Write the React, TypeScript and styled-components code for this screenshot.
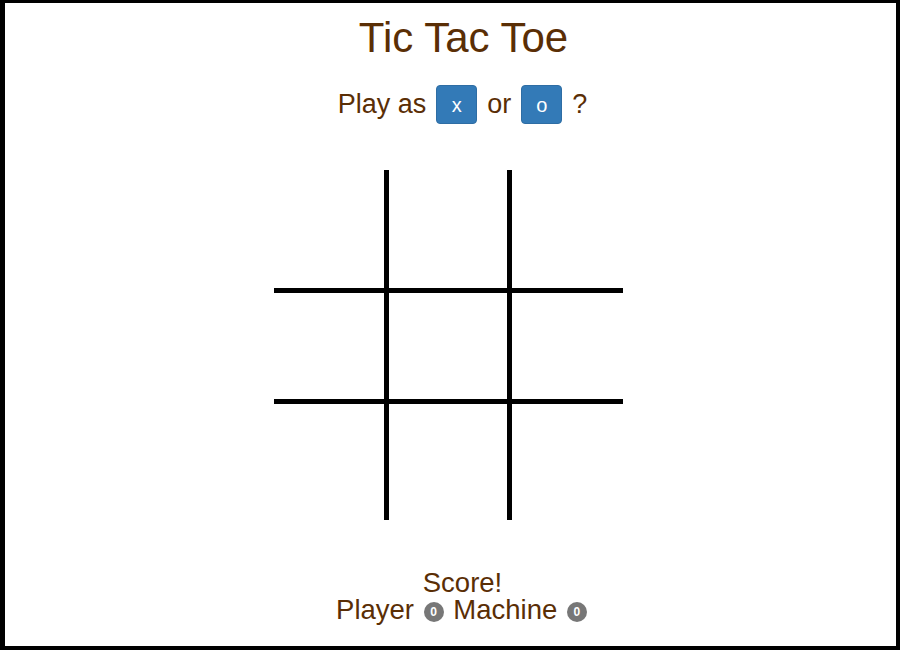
import styled, { createGlobalStyle } from "styled-components"

const GlobalStyle = createGlobalStyle`
  html, body {
    margin: 0;
    padding: 0;
    background: #fff;
  }
  body {
    font-family: "Liberation Sans", Arial, sans-serif;
  }
`

const brown = "#5a2e05"

export default function App() {
  const cells = [0, 1, 2, 3, 4, 5, 6, 7, 8]

  return (
    <>
      <GlobalStyle />
      <Frame>
        <Title>Tic Tac Toe</Title>

        <Chooser>
          <span>Play as</span>
          <PickButton type="button">x</PickButton>
          <span>or</span>
          <PickButton type="button">o</PickButton>
          <span>?</span>
        </Chooser>

        <Board>
          {cells.map((i) => (
            <Cell key={i} $col={i % 3} $row={Math.floor(i / 3)} />
          ))}
        </Board>

        <Score>
          <div>Score!</div>
          <div>
            Player <Badge>0</Badge> Machine <Badge>0</Badge>
          </div>
        </Score>
      </Frame>
    </>
  )
}

const Frame = styled.div`
  width: 900px;
  height: 650px;
  box-sizing: border-box;
  border-style: solid;
  border-color: #000;
  border-width: 3px 4px 4px 5px;
  display: flex;
  flex-direction: column;
  align-items: center;
  color: ${brown};
`

const Title = styled.h1`
  margin: 12px 0 0;
  padding-left: 26px;
  font-size: 42px;
  font-weight: 400;
  line-height: 45px;
`

const Chooser = styled.div`
  margin-top: 25px;
  padding-left: 24px;
  display: flex;
  align-items: center;
  gap: 10px;
  font-size: 27px;
  line-height: 29px;
`

const PickButton = styled.button`
  width: 41px;
  height: 39px;
  padding: 0;
  border: 1px solid #2e6da4;
  border-radius: 4px;
  background: #337ab7;
  color: #fff;
  font-family: "Liberation Sans", Arial, sans-serif;
  font-size: 20px;
  line-height: 1;
  cursor: pointer;
`

const Board = styled.div`
  margin-top: 46px;
  margin-right: 4px;
  display: grid;
  grid-template-columns: 115px 123px 111px;
  grid-template-rows: 123px 111px 116px;
`

const Cell = styled.div<{ $col: number; $row: number }>`
  box-sizing: border-box;
  border-right: ${(p) => (p.$col < 2 ? "5px solid #000" : "none")};
  border-bottom: ${(p) => (p.$row < 2 ? "5px solid #000" : "none")};
`

const Score = styled.div`
  margin-top: 49px;
  padding-left: 24px;
  text-align: center;
  font-size: 27.5px;
  line-height: 27px;
`

const Badge = styled.span`
  display: inline-block;
  min-width: 20px;
  height: 20px;
  margin: 0 2px;
  padding: 0 5px;
  box-sizing: border-box;
  border-radius: 10px;
  background: #777;
  color: #fff;
  font-size: 12px;
  font-weight: 700;
  line-height: 20px;
  text-align: center;
  vertical-align: middle;
`
